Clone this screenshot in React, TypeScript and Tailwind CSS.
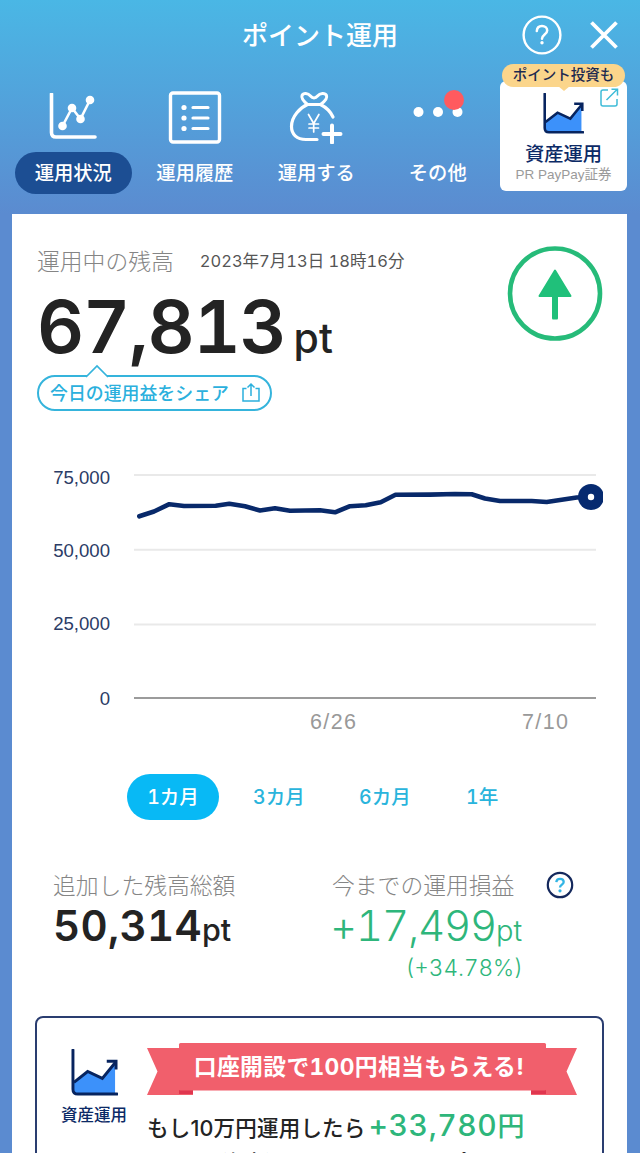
import React from 'react';
import clsx from 'clsx';

const StatusIcon = () => (
  <svg width="48" height="48" viewBox="0 0 48 48" fill="none" stroke="white" strokeLinecap="round" strokeLinejoin="round">
    <path d="M2.500 1v38.500q0 4.500 4.500 4.500H46" strokeWidth="3.600" />
    <path d="M13.500 33L23 15l8.500 11L41 7" strokeWidth="2.600" />
    <g fill="white" stroke="none">
      <circle cx="13.500" cy="33" r="4.300" />
      <circle cx="23" cy="15" r="4.300" />
      <circle cx="31.500" cy="26" r="4.300" />
      <circle cx="41" cy="7" r="4.300" />
    </g>
  </svg>
);

const HistoryIcon = () => (
  <svg width="54" height="54" viewBox="0 0 54 54" fill="none" stroke="white" strokeLinecap="round">
    <rect x="2.500" y="3" width="49" height="49" rx="2.500" strokeWidth="3.400" />
    <path d="M25 17.500h15M25 28h15M25 38.500h15" strokeWidth="3.200" />
    <g fill="white" stroke="none">
      <circle cx="16" cy="17.500" r="2.600" />
      <circle cx="16" cy="28" r="2.600" />
      <circle cx="16" cy="38.500" r="2.600" />
    </g>
  </svg>
);

const BagIcon = () => (
  <svg width="54" height="54" viewBox="0 0 54 54" fill="none" stroke="white" strokeLinecap="round" strokeLinejoin="round">
    <path d="M28 49.500H17C7.500 49.500 2.500 44 2.500 36.500 2.500 26 11.500 17.500 18.500 14.500H31.500C36.500 17 41.500 21.500 44 27" strokeWidth="3.200" />
    <path d="M18.500 14.500C15 11.500 12 8 13 5.500 14.500 2.500 19 3 21.500 6 23.500 8.500 26.500 8.500 28.500 6 31 3 36 2.500 37.500 5.500 38.500 8 35 12 31.500 14.500" strokeWidth="3" />
    <path d="M19.500 24.500l5.200 9 5.200-9M24.700 33.500v8.500M20 34h9.500M20 38h9.500" strokeWidth="1.700" />
    <path d="M43 35.500v17M34.500 44h17" strokeWidth="4" />
  </svg>
);

const MoreIcon = () => (
  <svg width="54" height="54" viewBox="0 0 54 54">
    <g fill="white">
      <circle cx="7.500" cy="22" r="5" />
      <circle cx="27" cy="22" r="5" />
      <circle cx="46.500" cy="22" r="5" />
    </g>
    <circle cx="43" cy="10" r="10" fill="#ff5a5f" />
  </svg>
);

const AssetIcon = ({ size }: { size: number }) => (
  <svg width={size} height={size} viewBox="0 0 48 48" fill="none" stroke="#07245f" strokeWidth="3">
    <path d="M3 34L17 23l15 7L45 15v30H7q-4 0-4-4z" fill="#3c91fa" stroke="none" />
    <path d="M2 1v40q0 5 5 5h40" strokeLinecap="round" />
    <path d="M3 34L17 23l15 7L45.500 13.500" strokeLinejoin="miter" />
    <path d="M36.500 12.500H46V21" />
  </svg>
);

const tabs = [
  { label: '運用状況', icon: <StatusIcon />, active: true },
  { label: '運用履歴', icon: <HistoryIcon /> },
  { label: '運用する', icon: <BagIcon /> },
  { label: 'その他', icon: <MoreIcon /> },
];

const Header = () => (
  <header className="h-[214px] text-white">
    <div className="flex h-[69px] items-center pl-[242px] pr-[21px]">
      <h1 className="-mt-[2px] text-[26px] font-medium leading-none">ポイント運用</h1>
      <div className="ml-auto flex items-center gap-[27px]">
        <svg width="40" height="40" viewBox="0 0 40 40" fill="none" stroke="white" strokeLinecap="round">
          <circle cx="20" cy="20" r="18.400" strokeWidth="2.400" />
          <path d="M14.800 16c.2-3.200 2.300-5 5.200-5s5.200 1.800 5.200 4.500c0 4-5.200 4.200-5.200 8.300" strokeWidth="2.500" />
          <circle cx="20" cy="27.800" r="1.700" fill="white" stroke="none" />
        </svg>
        <svg width="30" height="30" viewBox="0 0 30 30" stroke="white" strokeWidth="3.800">
          <path d="M2.500 2.500l25 25M27.500 2.500l-25 25" />
        </svg>
      </div>
    </div>
    <div className="flex pt-px">
      <nav className="flex pl-[12.500px]">
        {tabs.map((t) => (
          <div key={t.label} className="flex w-[121.500px] flex-col items-center">
            <div className="flex h-[82px] items-center justify-center pt-[12px]">{t.icon}</div>
            <span
              className={clsx(
                'flex h-[42px] w-[117px] items-center justify-center rounded-full text-[19.300px] font-medium leading-none',
                t.active && 'bg-[#1c4e93]',
              )}
            >
              {t.label}
            </span>
          </div>
        ))}
      </nav>
      <div className="relative mt-[11px] ml-[1.500px] flex h-[110px] w-[127px] flex-col items-center rounded-md bg-white pt-[12px]">
        <AssetIcon size={41} />
        <b className="mt-[8px] text-[19.300px] font-medium leading-[22px] text-[#0c2a66]">資産運用</b>
        <span className="mt-[3px] whitespace-nowrap font-['Liberation_Sans','Noto_Sans_CJK_JP',sans-serif] text-[13.500px] leading-[16px] text-[#9a9a9a]">
          PR PayPay証券
        </span>
        <span className="absolute -top-[17px] left-[2px] flex h-[23px] w-[123px] items-center justify-center rounded-full bg-[#fbd58b] pb-[2px] text-[14.500px] font-medium leading-none text-[#1d2a50]">
          ポイント投資も
        </span>
        <svg className="absolute top-[5px] left-[58px]" width="12" height="6" viewBox="0 0 12 6" fill="#fbd58b">
          <path d="M0 0h12L6 5z" />
        </svg>
        <svg className="absolute top-[7px] right-[8px]" width="19" height="19" viewBox="0 0 19 19" fill="none" stroke="#3fbcd8" strokeWidth="1.500">
          <path d="M8 2H3Q1 2 1 4v12q0 2 2 2h12q2 0 2-2v-5M6.500 12L17 1.500M11.500 1.200H17.500V7.500" />
        </svg>
      </div>
    </div>
  </header>
);

const Balance = () => (
  <section className="flex justify-between pl-[25px] pr-[24px] pt-[31px]">
    <div>
      <div className="flex h-[32px] items-center pt-px">
        <span className="text-[22.800px] font-light leading-none text-[#858585]">運用中の残高</span>
        <span className="ml-[26px] whitespace-nowrap font-['Inter','Noto_Sans_CJK_JP',sans-serif] text-[16.500px] leading-none tabular-nums text-[#555]">
          2023年7月13日 18時16分
        </span>
      </div>
      <div className="flex h-[87px] items-baseline font-['Inter',sans-serif] font-semibold text-[#232323]">
        <span className="text-[73px] leading-[100px] tracking-[-1.200px] tabular-nums">67,813</span>
        <span className="ml-[8px] text-[41px] font-medium">pt</span>
      </div>
      <div className="relative mt-[11px] flex h-[36px] w-[235px] items-center rounded-full border-2 border-[#35b4dc] pl-[11px] text-[#2bb0dd]">
        <span className="text-[17.900px] font-medium leading-none">今日の運用益をシェア</span>
        <svg className="-mt-[2px] ml-[12px]" width="20" height="21" viewBox="0 0 20 21" fill="none" stroke="currentColor" strokeWidth="1.500">
          <path d="M5.500 6.500H2V19h16V6.500h-3.500M10 14V2M6.500 5.500L10 2l3.500 3.500" />
        </svg>
        <svg className="absolute -top-[13px] left-[46px]" width="24" height="14" viewBox="0 0 24 14" fill="white" stroke="#35b4dc" strokeWidth="1.700">
          <path d="M1 13L12 2l11 11" />
        </svg>
      </div>
    </div>
    <svg width="96" height="96" viewBox="0 0 96 96" fill="none">
      <circle cx="48" cy="48.500" r="45" stroke="#26bb79" strokeWidth="4.600" />
      <path d="M48 25.500L63.500 51h-31z" fill="#20c07a" stroke="#20c07a" strokeWidth="2" strokeLinejoin="round" />
      <path d="M48 46v27" stroke="#20c07a" strokeWidth="6" />
      <path d="M46 73.500h4" stroke="#20c07a" strokeWidth="2" strokeLinecap="round" />
    </svg>
  </section>
);

const series = [
  [139.3, 516.3], [154, 511.5], [169.3, 504.2], [184, 506], [215.7, 505.7], [229.3, 503.7], [245, 506.3],
  [260, 510.5], [275, 508.3], [290, 510.7], [320, 510.3], [335, 512.3], [350, 506.2], [365.7, 505.3],
  [380.7, 502.3], [395.5, 494.8], [430, 494.6], [455, 494], [471.7, 494.3], [485, 498.5], [500, 501],
  [531.7, 501], [546.7, 502], [576.7, 497.5], [591, 497],
];

const Chart = () => (
  <section className="mt-[55px] pl-[25px]">
    <div className="flex">
      <div className="flex w-[73px] flex-col text-right font-['Liberation_Sans',sans-serif] text-[18.600px] leading-[24px] text-[#2b3c66]">
        <span className="mb-[49px]">75,000</span>
        <span className="mb-[49px]">50,000</span>
        <span className="mb-[51px]">25,000</span>
        <span>0</span>
      </div>
      <svg className="ml-[24px]" width="469" height="236" viewBox="134 466 469 236" fill="none">
        <path d="M134 475H596M134 549.700H596M134 624.500H596" stroke="#e9e9e9" strokeWidth="2" />
        <path d="M134 698H596" stroke="#9b9b9b" strokeWidth="2" />
        <polyline
          points={series.map((p) => p.join(',')).join(' ')}
          stroke="#08296a"
          strokeWidth="4.600"
          strokeLinecap="round"
          strokeLinejoin="round"
        />
        <circle cx="591" cy="497" r="13" fill="#062a70" />
        <circle cx="591" cy="497" r="3.200" fill="white" />
      </svg>
    </div>
    <div className="flex h-[24px] pl-[273px] font-['Liberation_Sans',sans-serif] text-[21.500px] leading-[22px] tracking-[1.400px] text-[#999]">
      <span className="w-[212px]">6/26</span>
      <span>7/10</span>
    </div>
  </section>
);

const Periods = () => (
  <div className="mt-[39px] flex h-[46px] items-center pl-[115px] font-['Inter','Noto_Sans_CJK_JP',sans-serif] text-[19.500px] font-medium leading-none tabular-nums text-[#29b4dc]">
    <span className="flex h-[46px] w-[92px] items-center justify-center rounded-full bg-[#08b9f5] pt-[2px] text-white">1カ月</span>
    <span className="ml-[34px] w-[106px] pt-[2px]">3カ月</span>
    <span className="w-[107px] pt-[2px]">6カ月</span>
    <span className="pt-[2px]">1年</span>
  </div>
);

const Totals = () => (
  <section className="mt-[49px] flex h-[147px] pl-[41px]">
    <div className="w-[279px]">
      <div className="pt-px text-[22.800px] font-light leading-[29px] text-[#858585]">追加した残高総額</div>
      <div className="whitespace-nowrap font-['Inter',sans-serif] text-[42px] font-semibold leading-[54px] text-[#232323]">
        <span className="tracking-[0.300px] tabular-nums">50,314</span>
        <span className="text-[30.500px] font-medium">pt</span>
      </div>
    </div>
    <div className="w-[191px]">
      <div className="whitespace-nowrap pt-px text-[22.800px] font-light leading-[29px] text-[#858585]">今までの運用損益</div>
      <div className="-ml-[2px] whitespace-nowrap font-['Inter',sans-serif] text-[42px] font-light leading-[54px] text-[#2eb67b]">
        <span className="tracking-[-1.200px] tabular-nums">+17,499</span>
        <span className="text-[29px]">pt</span>
      </div>
      <div className="-mt-[6px] text-right font-['Inter',sans-serif] text-[22.500px] font-light leading-[32px] tabular-nums text-[#2eb67b]">(+34.78%)</div>
    </div>
    <svg className="ml-[23px] mt-[2px]" width="28" height="28" viewBox="0 0 28 28" fill="none">
      <circle cx="14" cy="14" r="12.200" stroke="#14285c" strokeWidth="2.200" />
      <path d="M10.300 11.200c.2-2.200 1.600-3.300 3.700-3.300s3.700 1.200 3.700 3.100c0 2.600-3.700 2.800-3.700 5.600" stroke="#33b5e5" strokeWidth="2.300" />
      <circle cx="14" cy="19.800" r="1.600" fill="#33b5e5" />
    </svg>
  </section>
);

const Banner = () => (
  <section className="ml-[23px] flex h-[200px] w-[569px] rounded-lg border-2 border-[#2a3d70] pt-[25px]">
    <div className="ml-[21px] flex w-[72px] flex-col items-center pt-[6px]">
      <AssetIcon size={47} />
      <span className="mt-[8px] whitespace-nowrap text-[16.500px] font-medium leading-[20px] text-[#0c2a66]">資産運用</span>
    </div>
    <div className="ml-[17px] w-[432px]">
      <div className="relative flex h-[53px] items-center justify-center">
        <svg className="absolute inset-0" width="432" height="53" viewBox="0 0 432 53">
          <path d="M0 5h46v47H0l10.500-23.500zM430 5h-46v47h46l-10.500-23.500z" fill="#f15f6c" />
          <path d="M32 47h14v4H32zM384 47h15v4h-15z" fill="#e0364f" />
          <rect x="32" y="0" width="367" height="47.500" rx="1.500" fill="#f15f6c" />
        </svg>
        <span className="relative -top-[2px] -left-[4px] whitespace-nowrap font-['Inter','Noto_Sans_CJK_JP',sans-serif] text-[22.800px] font-bold leading-none tracking-[0.350px] tabular-nums text-white">
          口座開設で100円相当もらえる!
        </span>
      </div>
      <div className="mt-[11px] flex h-[36px] items-baseline whitespace-nowrap font-['Inter','Noto_Sans_CJK_JP',sans-serif] font-medium">
        <span className="text-[21.500px] leading-[36px] tracking-[0.200px] text-[#232323]">もし10万円運用したら</span>
        <span className="ml-[3px] text-[30px] leading-[36px] tracking-[0.600px] tabular-nums text-[#2eb67b]">
          +33,780<span className="text-[27px]">円</span>
        </span>
      </div>
      <div className="mt-[7px] whitespace-nowrap font-['Inter','Noto_Sans_CJK_JP',sans-serif] text-[21.300px] font-medium leading-[26px] text-[#232323]">
        PayPay資産運用なら、PayPayポイントで
      </div>
    </div>
  </section>
);

export default function App() {
  return (
    <div className="h-[1153px] w-[640px] overflow-hidden bg-[linear-gradient(180deg,#4ab7e5_0px,#5b8bd0_214px)] font-['Noto_Sans_CJK_JP',sans-serif]">
      <Header />
      <main className="mx-[12px] h-[939px] w-[615px] overflow-hidden bg-white">
        <Balance />
        <Chart />
        <Periods />
        <Totals />
        <Banner />
      </main>
    </div>
  );
}
